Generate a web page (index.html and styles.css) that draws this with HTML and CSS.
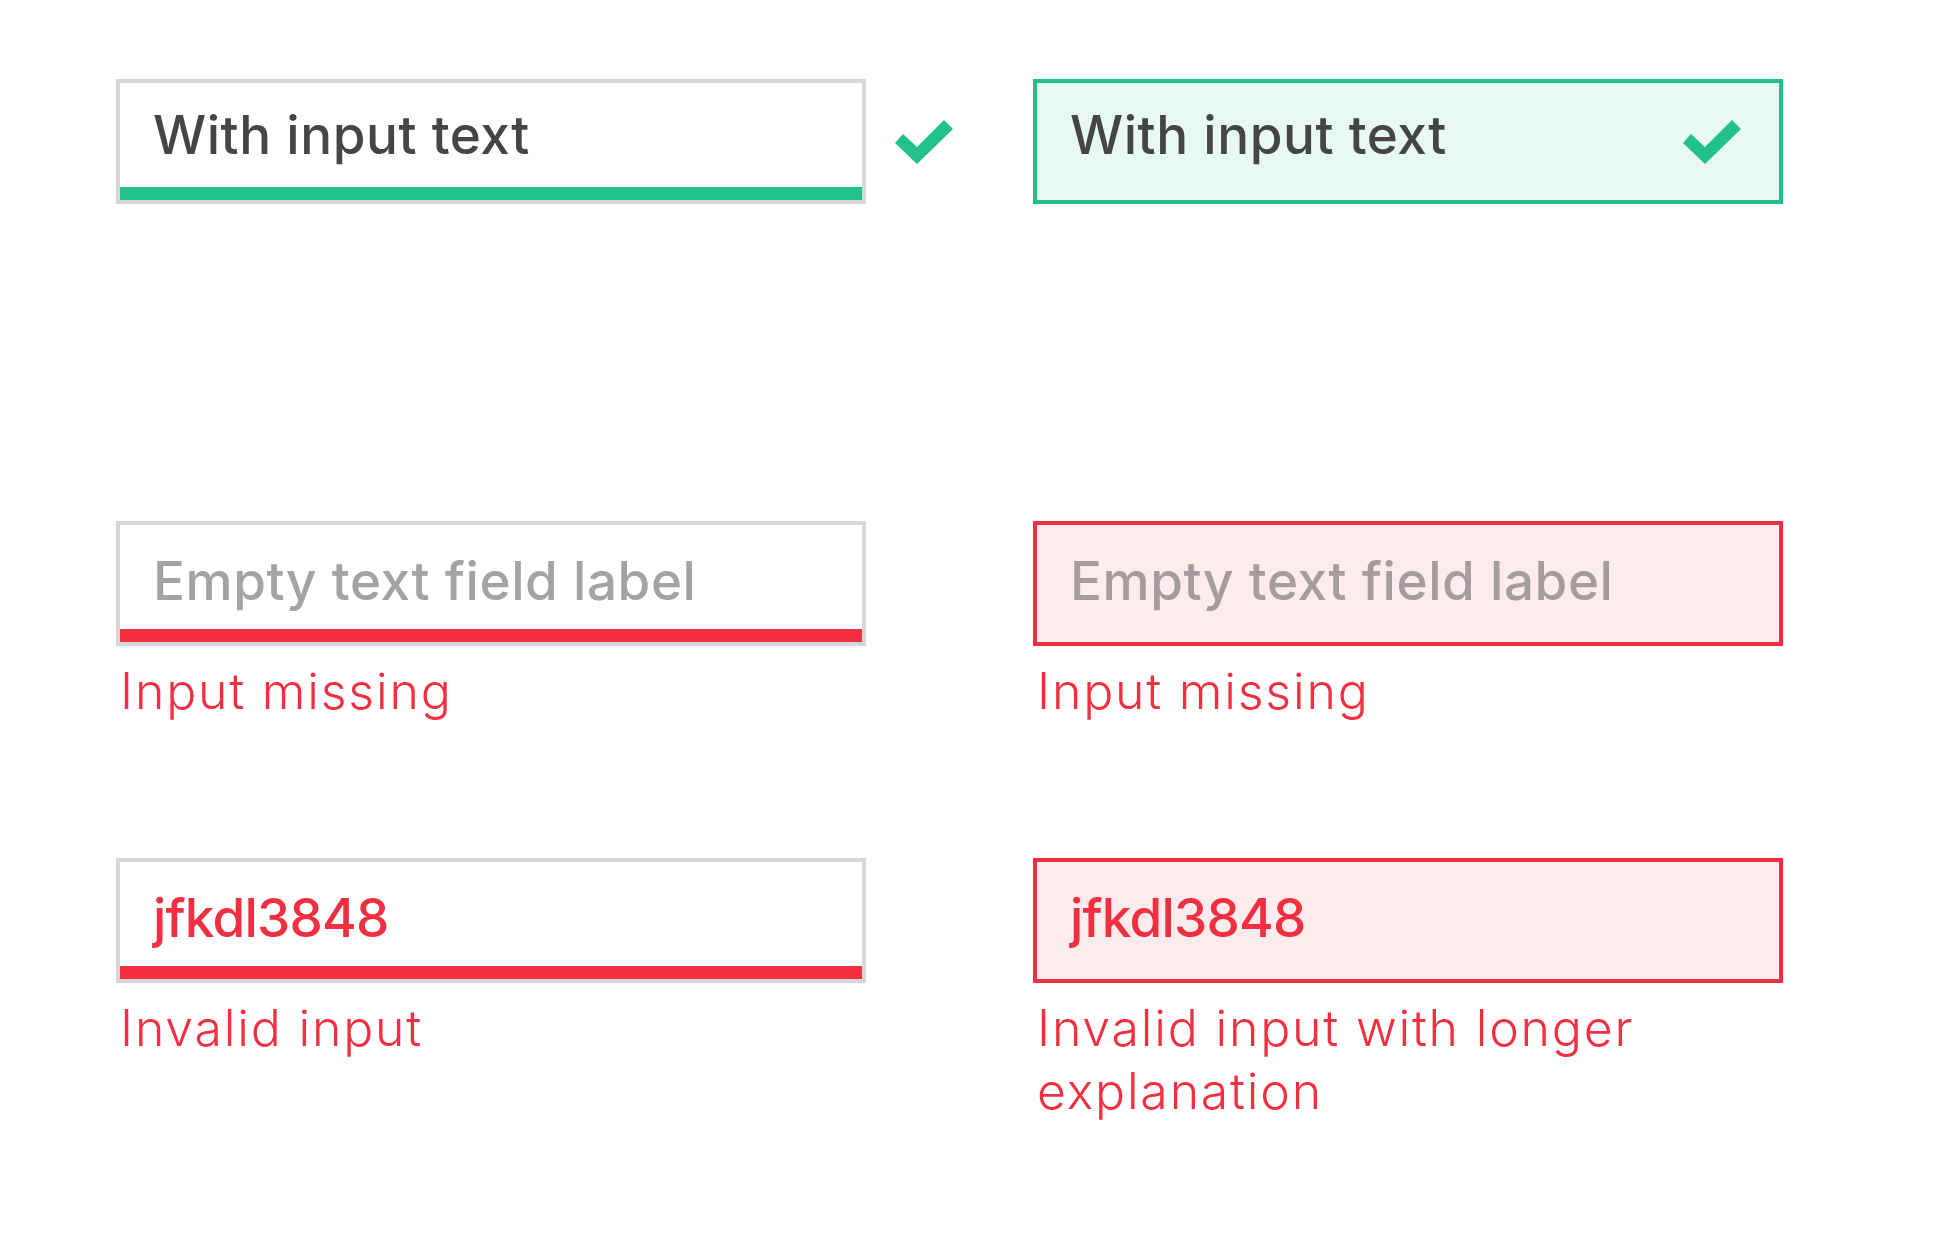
FILE: index.html
```html
<!DOCTYPE html>
<html lang="en">
<head>
<meta charset="utf-8">
<title>Text field states</title>
<link rel="stylesheet" href="styles.css">
</head>
<body>
<main class="page">
  <section class="row row-valid">
    <div class="cell">
      <div class="field field-line line-valid">
        <span class="value value-top">With input text</span>
        <svg class="check check-outside" viewBox="0 0 60 46" width="60" height="46" aria-hidden="true"><polygon points="1,24 9,15 23,28 50,1 59,10 23,45"/></svg>
      </div>
    </div>
    <div class="cell">
      <div class="field field-box box-valid">
        <span class="value value-top">With input text</span>
        <svg class="check check-inside" viewBox="0 0 60 46" width="60" height="46" aria-hidden="true"><polygon points="1,24 9,15 23,28 50,1 59,10 23,45"/></svg>
      </div>
    </div>
  </section>

  <section class="row row-missing">
    <div class="cell">
      <div class="field field-line line-error">
        <span class="value placeholder">Empty text field label</span>
      </div>
      <p class="helper">Input missing</p>
    </div>
    <div class="cell">
      <div class="field field-box box-error">
        <span class="value placeholder placeholder-tinted">Empty text field label</span>
      </div>
      <p class="helper">Input missing</p>
    </div>
  </section>

  <section class="row">
    <div class="cell">
      <div class="field field-line line-error">
        <span class="value invalid">jfkdl3848</span>
      </div>
      <p class="helper">Invalid input</p>
    </div>
    <div class="cell">
      <div class="field field-box box-error">
        <span class="value invalid">jfkdl3848</span>
      </div>
      <p class="helper">Invalid input with longer explanation</p>
    </div>
  </section>
</main>
</body>
</html>
```

FILE: styles.css
```css
html, body {
  margin: 0;
  padding: 0;
  background: #ffffff;
}

body {
  font-family: Inter, "Noto Sans", "Liberation Sans", sans-serif;
  color: #454545;
}

.page {
  padding: 79px 0 0 116px;
}

.row {
  display: grid;
  grid-template-columns: 750px 750px;
  column-gap: 167px;
  align-items: start;
}

.row-valid {
  margin-bottom: 317px;
}

.row-missing {
  margin-bottom: 135px;
}

.cell {
  display: flex;
  flex-direction: column;
}

.field {
  position: relative;
  box-sizing: border-box;
  height: 125px;
  border: 4px solid #d7d7d7;
  padding: 0 37px 0 33px;
  display: flex;
  align-items: flex-start;
  background: #ffffff;
}

.line-valid {
  box-shadow: inset 0 -13px 0 #22c08b;
}

.line-error {
  box-shadow: inset 0 -13px 0 #f12f41;
}

.box-valid {
  border-color: #22c08b;
  background: #e8f8f2;
}

.box-error {
  border-color: #f12f41;
  background: #feebee;
}

.value {
  font-size: 53px;
  line-height: 64px;
  font-weight: 500;
  letter-spacing: 0.55px;
  margin-top: 24px;
  white-space: nowrap;
}

.value-top {
  margin-top: 20px;
}

.placeholder {
  color: #a3a3a3;
}

.placeholder-tinted {
  color: #a59c9d;
}

.invalid {
  color: #f12f41;
  letter-spacing: -0.8px;
}

.check {
  fill: #22c08b;
  flex: none;
}

.check-inside {
  margin-left: auto;
  margin-top: 36px;
}

.check-outside {
  position: absolute;
  top: 36px;
  right: -92px;
}

.helper {
  margin: 14px 0 0 0;
  padding-left: 4px;
  font-size: 50px;
  line-height: 63px;
  font-weight: 300;
  letter-spacing: 1.8px;
  color: #f12f41;
}
```
